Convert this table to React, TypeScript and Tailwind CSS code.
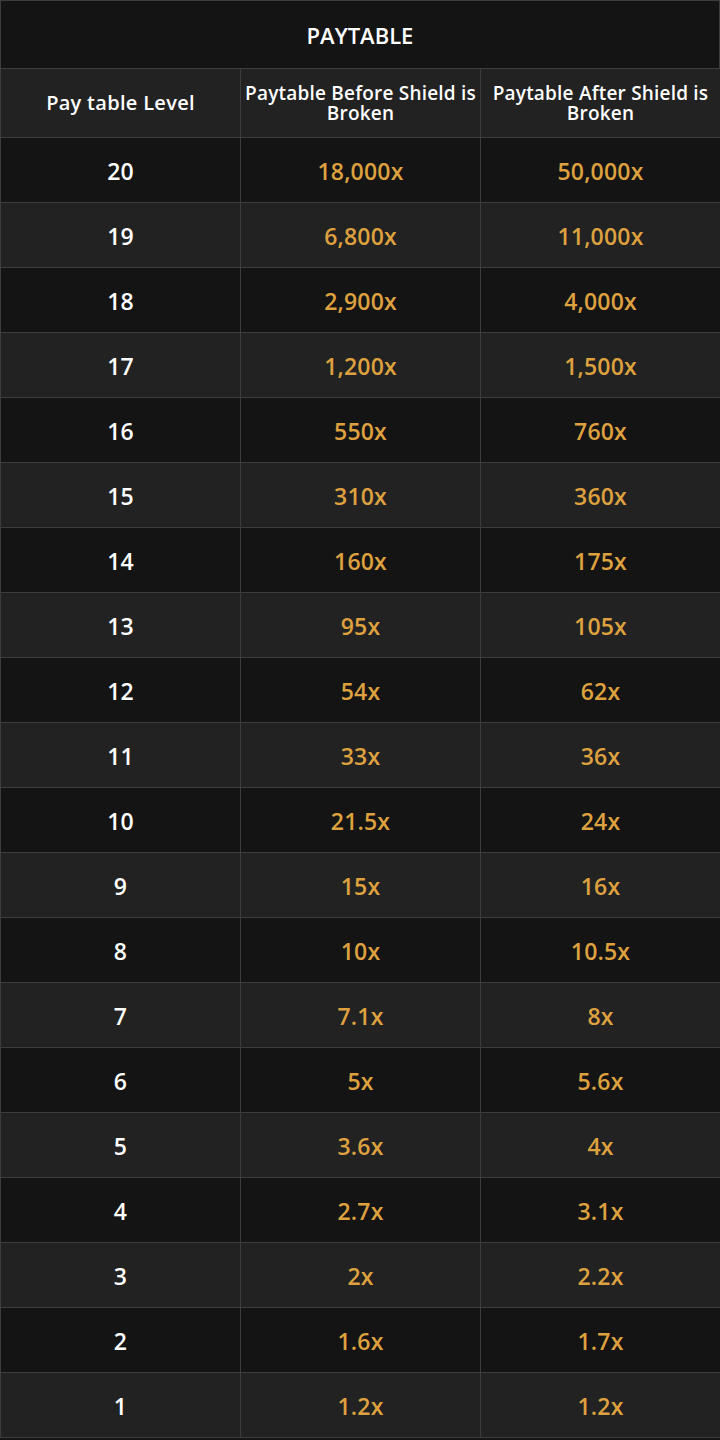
const rows: [string, string, string][] = [
  ["20", "18,000x", "50,000x"],
  ["19", "6,800x", "11,000x"],
  ["18", "2,900x", "4,000x"],
  ["17", "1,200x", "1,500x"],
  ["16", "550x", "760x"],
  ["15", "310x", "360x"],
  ["14", "160x", "175x"],
  ["13", "95x", "105x"],
  ["12", "54x", "62x"],
  ["11", "33x", "36x"],
  ["10", "21.5x", "24x"],
  ["9", "15x", "16x"],
  ["8", "10x", "10.5x"],
  ["7", "7.1x", "8x"],
  ["6", "5x", "5.6x"],
  ["5", "3.6x", "4x"],
  ["4", "2.7x", "3.1x"],
  ["3", "2x", "2.2x"],
  ["2", "1.6x", "1.7x"],
  ["1", "1.2x", "1.2x"],
];

const cell = "flex items-center justify-center text-center border-r border-b border-[#3d3d3d]";

const App = () => {
  return (
    <div className="w-[720px] h-[1440px] bg-[#141414] font-['Open_Sans',sans-serif] font-semibold text-white">
      <div className="border-t border-l border-[#3d3d3d]">
        <div className={`${cell} h-[68px] bg-[#141414] text-[22px] pt-[1px]`}>PAYTABLE</div>
        <div className="grid grid-cols-[240px_240px_240px]">
          <div className={`${cell} h-[69px] bg-[#222222] text-[20px] tracking-[0.3px]`}>Pay table Level</div>
          <div className={`${cell} h-[69px] bg-[#222222] text-[19px] leading-[20px] tracking-[0.2px]`}>
            Paytable Before Shield is Broken
          </div>
          <div className={`${cell} h-[69px] bg-[#222222] text-[19px] leading-[20px] tracking-[0.2px]`}>
            Paytable After Shield is Broken
          </div>
          {rows.map(([level, before, after], i) => {
            const bg = i % 2 === 0 ? "bg-[#141414]" : "bg-[#222222]";
            return (
              <div key={level} className="contents">
                <div className={`${cell} ${bg} h-[65px] pt-[2px] text-[23px] tracking-[0.2px]`}>{level}</div>
                <div className={`${cell} ${bg} h-[65px] pt-[2px] text-[23px] tracking-[0.2px] text-[#dea13f]`}>{before}</div>
                <div className={`${cell} ${bg} h-[65px] pt-[2px] text-[23px] tracking-[0.2px] text-[#dea13f]`}>{after}</div>
              </div>
            );
          })}
        </div>
      </div>
    </div>
  );
};

export default App;
